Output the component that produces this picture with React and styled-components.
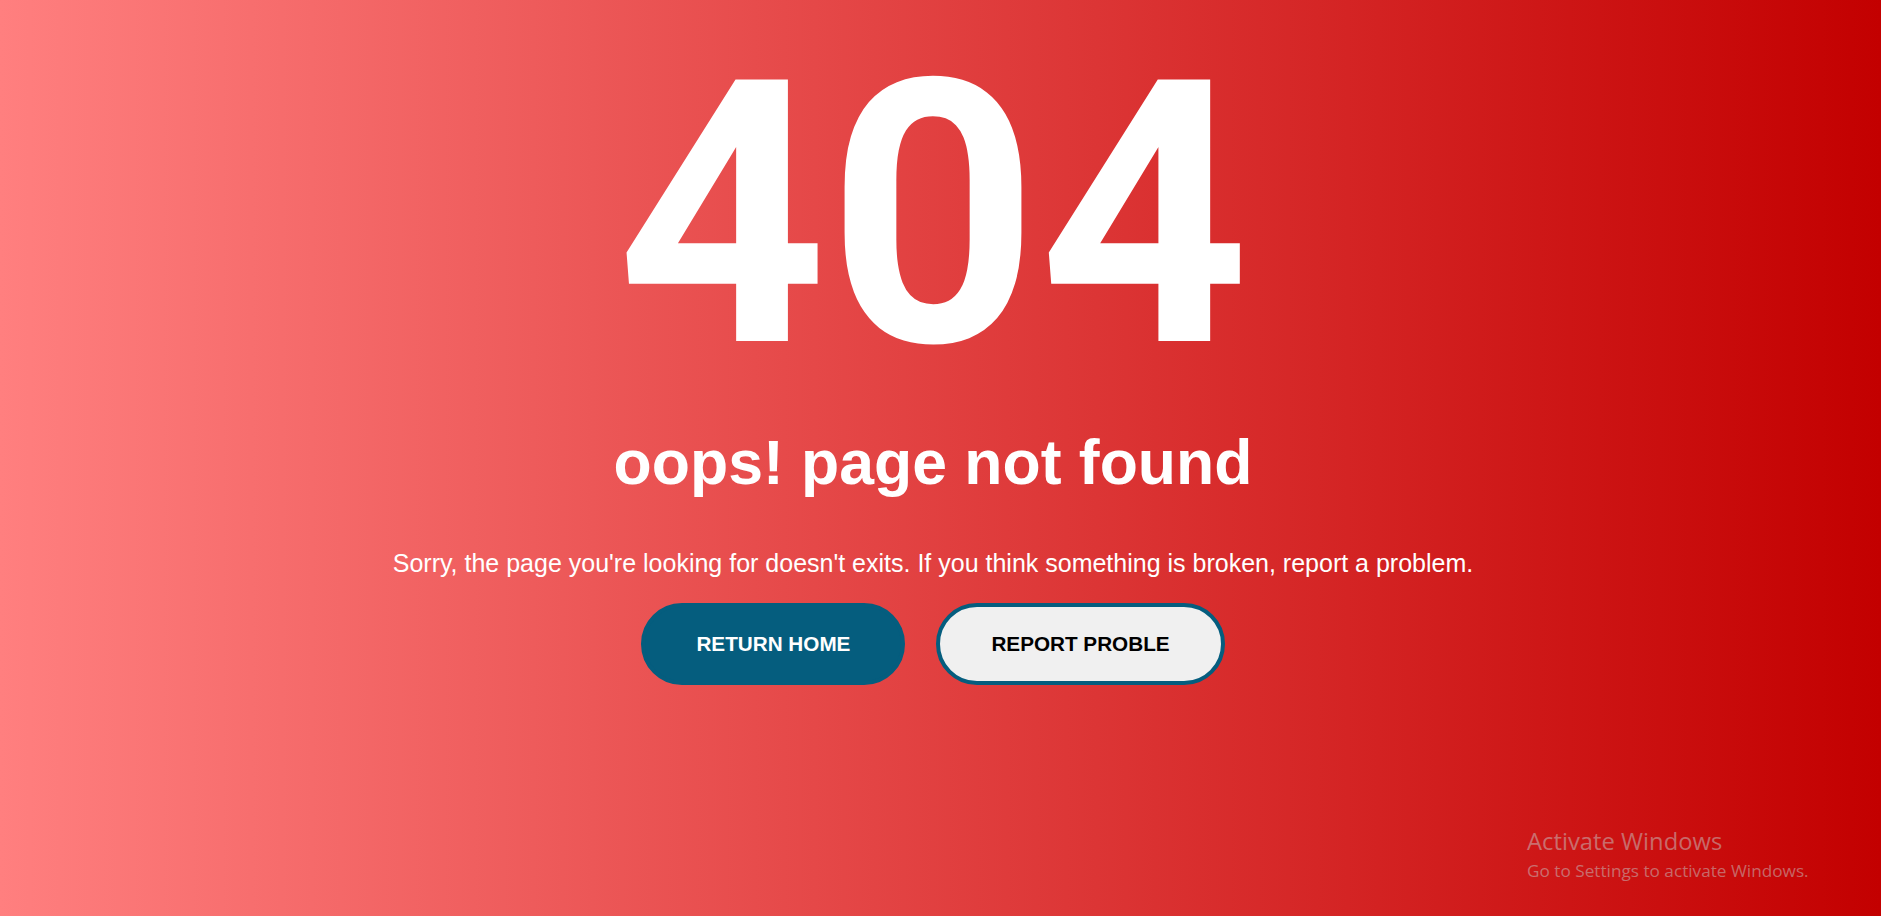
import React from "react";
import styled, { createGlobalStyle } from "styled-components";

const GlobalStyle = createGlobalStyle`
  html, body {
    margin: 0;
    padding: 0;
    height: 100%;
  }
  body {
    font-family: "Liberation Sans", Arial, sans-serif;
    overflow: hidden;
  }
  #root {
    min-height: 100%;
  }
`;

const Page = styled.main`
  position: relative;
  box-sizing: border-box;
  min-height: 100vh;
  padding: 0 15px 0 0;
  background: linear-gradient(to right, #ff7f7f, #c30000);
  display: flex;
  flex-direction: column;
  align-items: center;
  text-align: center;
  color: #ffffff;
`;

const Code = styled.h1`
  margin: 0;
  font-family: Roboto, "Liberation Sans", Arial, sans-serif;
  font-size: 368px;
  line-height: normal;
  font-weight: 700;
`;

const Heading = styled.h2`
  margin: 0;
  font-size: 62.5px;
  line-height: 1;
  font-weight: 700;
`;

const Message = styled.p`
  margin: 57px 0 0;
  font-size: 25px;
  line-height: 1;
  font-weight: 400;
`;

const Actions = styled.div`
  margin-top: 27px;
  display: flex;
  gap: 31px;
`;

const Button = styled.a`
  display: inline-block;
  box-sizing: border-box;
  padding: 25px 51px;
  border: 4px solid #055d7e;
  border-radius: 41px;
  background: ${(p) => (p.$variant === "light" ? "#f0f0f0" : "#055d7e")};
  color: ${(p) => (p.$variant === "light" ? "#000000" : "#ffffff")};
  font-family: "Liberation Sans", Arial, sans-serif;
  font-size: 20.7px;
  line-height: 24px;
  font-weight: 700;
  text-transform: uppercase;
  text-decoration: none;
  white-space: nowrap;
  cursor: pointer;
`;

const Watermark = styled.div`
  position: absolute;
  left: 1527px;
  top: 825px;
  text-align: left;
  font-family: "Open Sans", "Noto Sans", sans-serif;
  color: rgba(198, 198, 198, 0.5);
`;

const WatermarkTitle = styled.div`
  font-size: 23.8px;
  line-height: 32px;
`;

const WatermarkText = styled.div`
  font-size: 17.2px;
  line-height: 28px;
`;

export default function App() {
  return (
    <>
      <GlobalStyle />
      <Page>
        <Code>404</Code>
        <Heading>oops! page not found</Heading>
        <Message>
          Sorry, the page you're looking for doesn't exits. If you think
          something is broken, report a problem.
        </Message>
        <Actions>
          <Button href="#">Return Home</Button>
          <Button href="#" $variant="light">
            Report Proble
          </Button>
        </Actions>
        <Watermark>
          <WatermarkTitle>Activate Windows</WatermarkTitle>
          <WatermarkText>Go to Settings to activate Windows.</WatermarkText>
        </Watermark>
      </Page>
    </>
  );
}
